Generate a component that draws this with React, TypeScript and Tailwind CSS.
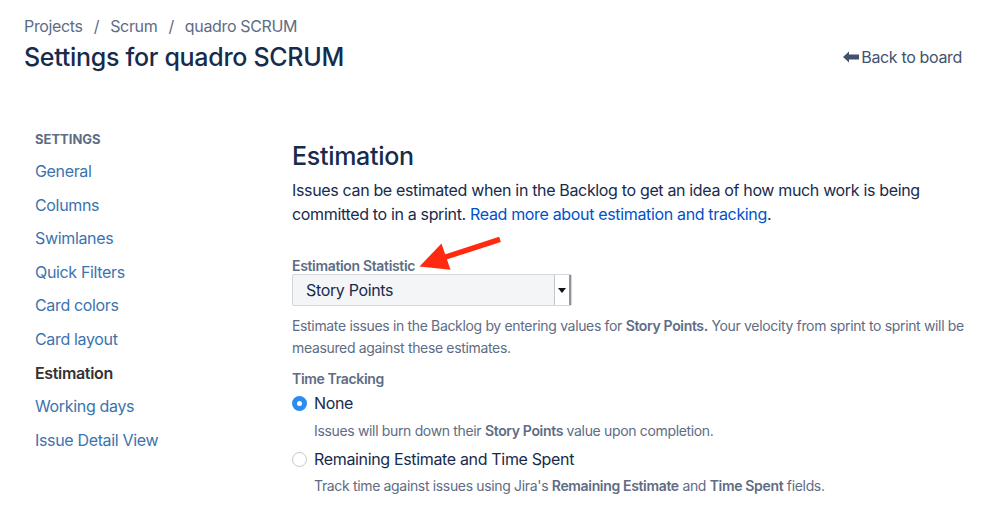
import React from "react";

const navItems = [
  "General",
  "Columns",
  "Swimlanes",
  "Quick Filters",
  "Card colors",
  "Card layout",
  "Estimation",
  "Working days",
  "Issue Detail View",
];

export default function App() {
  return (
    <div
      className="relative w-[998px] h-[517px] overflow-hidden bg-white text-[#172b4d] tracking-[-0.34px]"
      style={{ fontFamily: "Inter, 'Liberation Sans', sans-serif" }}
    >
      {/* Header */}
      <div className="flex items-start justify-between pl-[24px] pr-[36px] pt-[15px]">
        <div className="flex flex-col">
          <div className="flex items-center text-[16px] leading-[22px] text-[#5e6c84]">
            <span>Projects</span>
            <span className="px-[11px]">/</span>
            <span>Scrum</span>
            <span className="px-[11px]">/</span>
            <span>quadro SCRUM</span>
          </div>
          <h1 className="mt-[4px] text-[25px] leading-[32px] font-medium text-[#172b4d] tracking-[-0.3px]">
            Settings for quadro SCRUM
          </h1>
        </div>
        <div className="mt-[30px] flex items-center text-[16px] leading-[24px] text-[#42526e]">
          <svg width="17" height="12" viewBox="0 0 17 12" className="mr-[1px]">
            <path d="M0 6 L6 0.5 L6 3.5 L16 3.5 L16 8.5 L6 8.5 L6 11.5 Z" fill="#42526e" />
          </svg>
          <span>Back to board</span>
        </div>
      </div>

      {/* Body */}
      <div className="flex pt-[58px]">
        {/* Sidebar */}
        <div className="w-[292px] shrink-0 pl-[35px] flex flex-col">
          <div className="text-[13px] leading-[16px] font-bold text-[#5e6c84] tracking-[0px]">
            SETTINGS
          </div>
          <div className="mt-[12px] flex flex-col gap-[9.6px]">
            {navItems.map((n) => (
              <div
                key={n}
                className={
                  n === "Estimation"
                    ? "text-[16px] leading-[24px] font-semibold text-[#333333]"
                    : "text-[16px] leading-[24px] text-[#3b73af]"
                }
              >
                {n}
              </div>
            ))}
          </div>
        </div>

        {/* Main */}
        <div className="flex-1 pr-[20px]">
          <h2 className="mt-[10px] text-[25px] leading-[30px] font-medium text-[#172b4d] tracking-[-0.3px]">
            Estimation
          </h2>
          <p className="mt-[7px] text-[16px] leading-[24px] text-[#172b4d]">
            Issues can be estimated when in the Backlog to get an idea of how much work is being
            committed to in a sprint.{" "}
            <span className="text-[#0052cc]">Read more about estimation and tracking</span>.
          </p>

          <div className="relative mt-[30px]">
            <div className="text-[14px] leading-[20px] font-semibold text-[#5e6c84]">
              Estimation Statistic
            </div>
            <svg
              className="absolute left-[120px] top-[-30px]"
              width="95"
              height="48"
              viewBox="0 0 95 48"
            >
              <path d="M88 13.3 L32 31.5" stroke="#ff2a10" strokeWidth="5.5" strokeLinecap="butt" fill="none" />
              <path d="M7.5 40.5 L29.5 17.5 L38.5 43.8 Z" fill="#ff2a10" />
            </svg>
            <div className="mt-[-2px] flex w-[280px] h-[32px] border border-[#d4d6da] rounded-[2px] bg-[#f4f5f7]">
              <div className="flex-1 flex items-center pl-[13px] text-[16px] text-[#172b4d]">
                Story Points
              </div>
              <div className="w-[17px] flex items-center justify-center bg-white border-l border-[#c1c7d0] border-r-[2px] border-r-[#8f959c]">
                <svg width="8" height="5" viewBox="0 0 8 5">
                  <path d="M0 0 L8 0 L4 5 Z" fill="#111" />
                </svg>
              </div>
            </div>
          </div>

          <p className="mt-[9px] text-[14px] leading-[22px] text-[#5e6c84]">
            Estimate issues in the Backlog by entering values for{" "}
            <span className="font-semibold">Story Points.</span> Your velocity from sprint to sprint
            will be measured against these estimates.
          </p>

          <div className="mt-[10px] text-[14px] leading-[20px] font-semibold text-[#5e6c84]">
            Time Tracking
          </div>

          <div className="mt-[2px] flex items-center h-[24px]">
            <div className="w-[15px] h-[15px] rounded-full bg-[#2d8cf0] flex items-center justify-center">
              <div className="w-[5px] h-[5px] rounded-full bg-white" />
            </div>
            <span className="ml-[7px] text-[16px] text-[#172b4d]">None</span>
          </div>
          <div className="ml-[22px] mt-[6px] text-[14px] leading-[20px] text-[#5e6c84]">
            Issues will burn down their <span className="font-semibold">Story Points</span> value
            upon completion.
          </div>

          <div className="mt-[6px] flex items-center h-[24px]">
            <div className="w-[15px] h-[15px] rounded-full border border-[#c8c8c8] bg-white" />
            <span className="ml-[7px] text-[16px] text-[#172b4d]">
              Remaining Estimate and Time Spent
            </span>
          </div>
          <div className="ml-[22px] mt-[5px] text-[14px] leading-[20px] text-[#5e6c84]">
            Track time against issues using Jira's{" "}
            <span className="font-semibold">Remaining Estimate</span> and{" "}
            <span className="font-semibold">Time Spent</span> fields.
          </div>
        </div>
      </div>
    </div>
  );
}
